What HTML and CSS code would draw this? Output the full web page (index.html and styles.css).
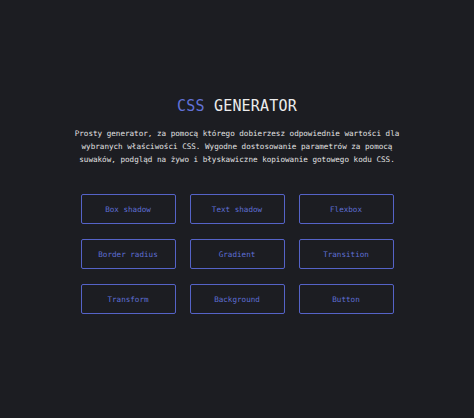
FILE: index.html
```html
<!DOCTYPE html>
<html lang="pl">
<head>
    <meta charset="UTF-8">
    <meta name="viewport" content="width=device-width, initial-scale=1.0">
    <title>CSS Generator</title>
    <link rel="stylesheet" href="styles.css">
</head>
<body>
    <div class="container">
        <h1 class="title"><span class="accent">CSS</span> GENERATOR</h1>
        <p class="intro">Prosty generator, za pomocą którego dobierzesz odpowiednie wartości dla wybranych właściwości CSS. Wygodne dostosowanie parametrów za pomocą suwaków, podgląd na żywo i błyskawiczne kopiowanie gotowego kodu CSS.</p>
        <div class="tools">
            <a href="#" class="tool">Box shadow</a>
            <a href="#" class="tool">Text shadow</a>
            <a href="#" class="tool">Flexbox</a>
            <a href="#" class="tool">Border radius</a>
            <a href="#" class="tool">Gradient</a>
            <a href="#" class="tool">Transition</a>
            <a href="#" class="tool">Transform</a>
            <a href="#" class="tool">Background</a>
            <a href="#" class="tool">Button</a>
        </div>
    </div>
</body>
</html>
```

FILE: styles.css
```css
body {
    font-family: "DejaVu Sans Mono", "Liberation Mono", monospace;
    background-color: #1c1d22;
    color: #e2e2e2;
    margin: 0;
    padding: 0;
}
.container {
    width: 340px;
    margin: 0 auto;
    padding-top: 97px;
    text-align: center;
}
.title {
    font-size: 15px;
    font-weight: normal;
    color: #ececec;
    margin: 0 0 12px;
    letter-spacing: 0.2px;
}
.accent {
    color: #6272d8;
}
.intro {
    font-size: 7.6px;
    line-height: 13px;
    margin: 0 0 28px;
}
.tools {
    display: grid;
    grid-template-columns: repeat(3, 95px);
    gap: 15px 14px;
    justify-content: center;
}
.tool {
    display: flex;
    align-items: center;
    justify-content: center;
    height: 28px;
    border: 1px solid #5563c8;
    border-radius: 2px;
    color: #5f6fd6;
    font-size: 7.6px;
    text-decoration: none;
}
.tool:hover {
    background-color: #23253a;
}
```
